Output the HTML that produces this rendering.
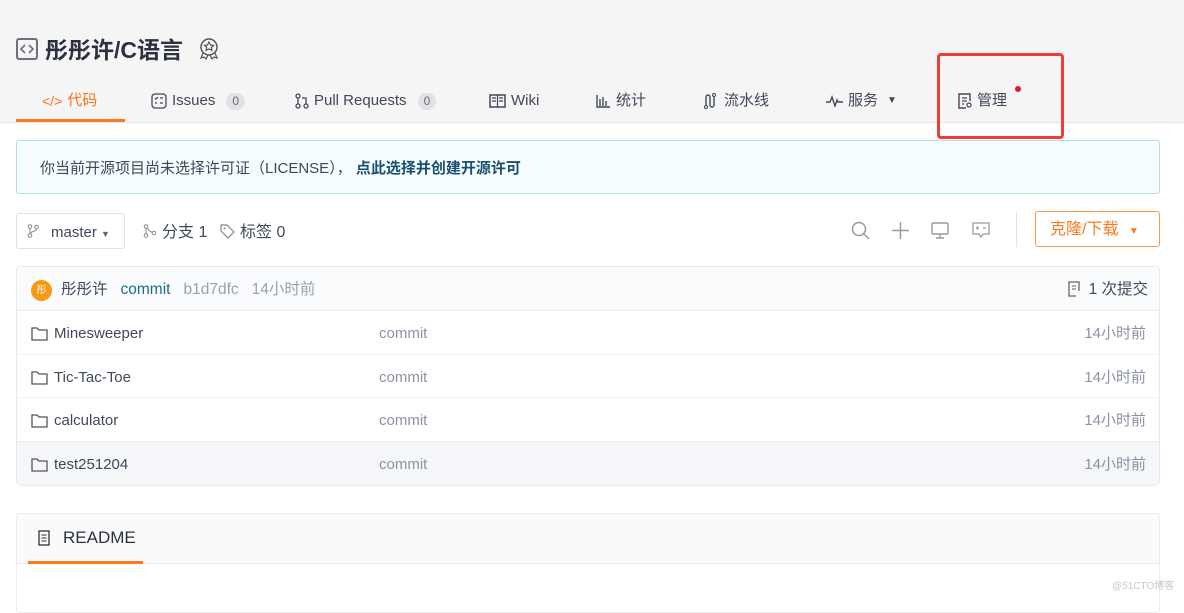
<!DOCTYPE html>
<html><head><meta charset="utf-8"><style>
*{box-sizing:border-box;margin:0;padding:0}
body{width:1184px;height:598px;overflow:hidden;background:#fff;font-family:"Liberation Sans","Noto Sans CJK SC",sans-serif;color:#40485b;position:relative;line-height:22px}
.a{position:absolute;white-space:nowrap}
.top{position:absolute;left:0;top:0;width:1184px;height:123px;background:#f5f5f5;border-bottom:1px solid #e6e6e6}
.tab{position:absolute;top:90px;height:22px;line-height:22px;font-size:15px;color:#40485b;display:flex;align-items:center;gap:5px}
.badge{display:inline-block;background:#dfe1e6;color:#6a7080;border-radius:9px;font-size:12px;line-height:17px;padding:0 6px;margin-left:6px}
svg{display:block}
.row{position:absolute;left:17px;width:1142px;height:43px;line-height:45px;border-top:1px solid #eef0f2;font-size:15px}
.row .n{position:absolute;left:14px;top:0;height:45px;display:flex;gap:6px;align-items:center;color:#40485b}
.row .c{position:absolute;left:362px;top:0;color:#8c92a4}
.row .t{position:absolute;right:13px;top:0;color:#8c92a4}
</style></head><body>
<div class="top"></div>
<svg class="a" style="left:16px;top:38px" width="22" height="22" viewBox="0 0 22 22"><rect x="1" y="1" width="20" height="20" rx="2" fill="none" stroke="#6a7080" stroke-width="2"/><path d="M9 7l-4 4 4 4M13 7l4 4-4 4" fill="none" stroke="#6a7080" stroke-width="1.6"/></svg>
<div class="a" style="left:45px;top:34px;font-size:23px;line-height:32px;font-weight:bold;color:#2b3140">彤彤许/C语言</div>
<svg class="a" style="left:198px;top:37px" width="22" height="24" viewBox="0 0 22 24"><circle cx="11" cy="10" r="8" fill="none" stroke="#555" stroke-width="1.5"/><path d="M11 5l1.5 3 3 .4-2.2 2 .6 3-2.9-1.5-2.9 1.5.6-3-2.2-2 3-.4z" fill="none" stroke="#555" stroke-width="1.2"/><path d="M5 16l-2 5 3-1 2 2 2-4M17 16l2 5-3-1-2 2-2-4" fill="none" stroke="#555" stroke-width="1.2"/></svg>
<div class="tab" style="left:42px;color:#f97316"><span style="font-size:14px">&lt;/&gt;</span>代码</div>
<div class="a" style="left:16px;top:119px;width:109px;height:3px;background:#fb7a1a"></div>
<div class="tab" style="left:151px"><svg width="16" height="16" viewBox="0 0 16 16"><rect x="1" y="1" width="14" height="14" rx="3" fill="none" stroke="#40485b" stroke-width="1.3"/><path d="M4 5l1 1 2-2M4 10h2M9 5h3M9 10h3" stroke="#40485b" stroke-width="1.2" fill="none"/></svg><span>Issues</span><span class="badge">0</span></div>
<div class="tab" style="left:295px"><svg width="14" height="16" viewBox="0 0 14 16"><circle cx="3" cy="3" r="2" fill="none" stroke="#40485b" stroke-width="1.3"/><circle cx="3" cy="13" r="2" fill="none" stroke="#40485b" stroke-width="1.3"/><circle cx="11" cy="13" r="2" fill="none" stroke="#40485b" stroke-width="1.3"/><path d="M3 5v6M11 11V5H7" stroke="#40485b" stroke-width="1.3" fill="none"/></svg><span>Pull Requests</span><span class="badge">0</span></div>
<div class="tab" style="left:489px"><svg width="17" height="14" viewBox="0 0 17 14"><rect x="1" y="1" width="15" height="12" fill="none" stroke="#40485b" stroke-width="1.5"/><path d="M8.5 1v12M3 4h4M3 7h4M10 4h4M10 7h4" stroke="#40485b" stroke-width="1.2"/></svg><span>Wiki</span></div>
<div class="tab" style="left:596px"><svg width="15" height="14" viewBox="0 0 15 14"><path d="M1 1v12h13M4 5v7M7 3v9M10 7v5" stroke="#40485b" stroke-width="1.4" fill="none"/></svg>统计</div>
<div class="tab" style="left:703px"><svg width="16" height="16" viewBox="0 0 16 16"><path d="M3 13V4a2 2 0 014 0v8a2 2 0 004 0V3" stroke="#40485b" stroke-width="1.4" fill="none"/><circle cx="3" cy="14" r="1.5" fill="none" stroke="#40485b"/><circle cx="11" cy="2" r="1.5" fill="none" stroke="#40485b"/></svg>流水线</div>
<div class="tab" style="left:826px"><svg width="17" height="12" viewBox="0 0 17 12"><path d="M0 7h4l2-5 3 9 2-6 1 2h5" stroke="#40485b" stroke-width="1.4" fill="none"/></svg>服务<span style="font-size:10px;margin-left:4px">▼</span></div>
<div class="tab" style="left:958px"><svg width="14" height="16" viewBox="0 0 14 16"><path d="M8 15H1V1h11v7" stroke="#40485b" stroke-width="1.4" fill="none"/><path d="M4 5h5M4 8h5M4 11h2" stroke="#40485b" stroke-width="1.2"/><circle cx="11" cy="12" r="2" fill="none" stroke="#40485b" stroke-width="1.3"/></svg>管理</div>
<div class="a" style="left:1015px;top:86px;width:6px;height:6px;border-radius:3px;background:#e8152e"></div>
<div class="a" style="left:937px;top:53px;width:127px;height:86px;border:3px solid #f23a3a;border-radius:4px"></div>

<div class="a" style="left:16px;top:140px;width:1144px;height:54px;background:#f5fdfe;border:1px solid #b5dde5;border-radius:3px"></div>
<div class="a" style="left:40px;top:158px;font-size:15px;color:#3a4a5a">你当前开源项目尚未选择许可证（LICENSE）， <b style="color:#1b4f6e">点此选择并创建开源许可</b></div>

<div class="a" style="left:16px;top:213px;width:109px;height:36px;border:1px solid #dfe3e8;border-radius:3px;background:#fff"></div>
<svg class="a" style="left:27px;top:224px" width="12" height="14" viewBox="0 0 12 14"><circle cx="3" cy="2.5" r="1.8" fill="none" stroke="#888"/><circle cx="3" cy="11.5" r="1.8" fill="none" stroke="#888"/><circle cx="9.5" cy="3" r="1.8" fill="none" stroke="#888"/><path d="M3 4.5v5M9.5 5c0 3-6 2-6 4.5" stroke="#888" fill="none"/></svg>
<div class="a" style="left:51px;top:222px;font-size:15px;color:#40485b">master <span style="font-size:9px;color:#666">▼</span></div>
<svg class="a" style="left:143px;top:224px" width="14" height="14" viewBox="0 0 14 14"><circle cx="3" cy="2.5" r="1.8" fill="none" stroke="#888"/><circle cx="3" cy="11.5" r="1.8" fill="none" stroke="#888"/><circle cx="11" cy="9" r="1.8" fill="none" stroke="#888"/><path d="M3 4.5v5M4.5 4c1 3 4 4 5 4.5" stroke="#888" fill="none"/></svg>
<div class="a" style="left:162px;top:222px;font-size:16px;color:#40485b">分支 1</div>
<svg class="a" style="left:220px;top:224px" width="15" height="15" viewBox="0 0 15 15"><path d="M1 1h6l7 7-6 6-7-7z" fill="none" stroke="#888" stroke-width="1.2"/><circle cx="4.5" cy="4.5" r="1" fill="#888"/></svg>
<div class="a" style="left:240px;top:222px;font-size:16px;color:#40485b">标签 0</div>
<svg class="a" style="left:851px;top:221px" width="19" height="19" viewBox="0 0 19 19"><circle cx="8" cy="8" r="6.5" fill="none" stroke="#999" stroke-width="1.5"/><path d="M13 13l5 5" stroke="#999" stroke-width="1.5"/></svg>
<svg class="a" style="left:892px;top:222px" width="17" height="17" viewBox="0 0 17 17"><path d="M8.5 0v17M0 8.5h17" stroke="#999" stroke-width="1.4"/></svg>
<svg class="a" style="left:931px;top:222px" width="18" height="17" viewBox="0 0 18 17"><rect x="1" y="1" width="16" height="11" rx="1" fill="none" stroke="#999" stroke-width="1.4"/><path d="M9 12v3M5 16h8" stroke="#999" stroke-width="1.4"/></svg>
<svg class="a" style="left:972px;top:222px" width="18" height="17" viewBox="0 0 18 17"><path d="M1 1h16v11h-6l-2 3-2-3H1z" fill="none" stroke="#999" stroke-width="1.3"/><path d="M4 6h3M5.5 4.5v3M11 6h3" stroke="#999" stroke-width="1.2"/></svg>
<div class="a" style="left:1016px;top:211px;width:1px;height:36px;background:#e3e3e3"></div>
<div class="a" style="left:1035px;top:211px;width:125px;height:36px;line-height:36px;border:1px solid #fb9a4a;border-radius:3px;background:#fff;color:#fb7a1a;font-size:16px;padding:0 0 0 14px">克隆/下载 <span style="font-size:10px;margin-left:6px">▼</span></div>

<div class="a" style="left:16px;top:266px;width:1144px;height:220px;border:1px solid #e5e8ec;border-radius:4px;overflow:hidden">
 <div style="position:absolute;left:0;top:0;width:1142px;height:44px;background:#fafbfc"></div>
 <div style="position:absolute;left:14px;top:13px;width:21px;height:21px;border-radius:50%;background:#f59a12;color:#fff;font-size:10px;text-align:center;line-height:21px">彤</div>
 <div style="position:absolute;left:44px;top:1px;line-height:44px;font-size:15.5px;white-space:nowrap"><span style="color:#40485b">彤彤许</span><span style="color:#1d6b8a;margin-left:13px">commit</span><span style="color:#9aa0ad;margin-left:13px">b1d7dfc</span><span style="color:#9aa0ad;margin-left:13px">14小时前</span></div>
 <svg style="position:absolute;right:78px;top:14px" width="13" height="16" viewBox="0 0 13 16"><path d="M8 15H1V1h10v9" stroke="#666" stroke-width="1.3" fill="none"/><path d="M4 5h4M4 8h4" stroke="#666"/></svg>
 <div style="position:absolute;right:11px;top:1px;line-height:44px;font-size:15.5px;color:#40485b">1 次提交</div>
</div>
<div class="row" style="top:310px;border-top:1px solid #eaedf0"><div class="n"><svg width="17" height="14" viewBox="0 0 17 14"><path d="M1 1h5l2 2h8v10H1z" fill="none" stroke="#555" stroke-width="1.3"/></svg><span>Minesweeper</span></div><div class="c">commit</div><div class="t">14小时前</div></div>
<div class="row" style="top:354px"><div class="n"><svg width="17" height="14" viewBox="0 0 17 14"><path d="M1 1h5l2 2h8v10H1z" fill="none" stroke="#555" stroke-width="1.3"/></svg><span>Tic-Tac-Toe</span></div><div class="c">commit</div><div class="t">14小时前</div></div>
<div class="row" style="top:397px"><div class="n"><svg width="17" height="14" viewBox="0 0 17 14"><path d="M1 1h5l2 2h8v10H1z" fill="none" stroke="#555" stroke-width="1.3"/></svg><span>calculator</span></div><div class="c">commit</div><div class="t">14小时前</div></div>
<div class="row" style="top:441px;background:#f4f6f9;height:44px;line-height:46px"><div class="n" style="height:46px"><svg width="17" height="14" viewBox="0 0 17 14"><path d="M1 1h5l2 2h8v10H1z" fill="none" stroke="#555" stroke-width="1.3"/></svg><span>test251204</span></div><div class="c">commit</div><div class="t">14小时前</div></div>

<div class="a" style="left:16px;top:513px;width:1144px;height:100px;border:1px solid #ececec;border-radius:4px;overflow:hidden">
 <div style="position:absolute;left:0;top:0;width:1142px;height:50px;background:#fafafa;border-bottom:1px solid #ececec"></div>
 <svg style="position:absolute;left:21px;top:16px" width="12" height="16" viewBox="0 0 12 16"><rect x="1" y="1" width="10" height="14" fill="none" stroke="#333" stroke-width="1.3"/><path d="M3.5 5h5M3.5 8h5M3.5 11h5" stroke="#333"/></svg>
 <div style="position:absolute;left:46px;top:13px;font-size:17px;color:#2b3140">README</div>
 <div style="position:absolute;left:11px;top:47px;width:115px;height:3px;background:#fb7a1a"></div>
</div>
<div class="a" style="left:1112px;top:576px;font-size:10px;color:#c8c8c8">@51CTO博客</div>
</body></html>
